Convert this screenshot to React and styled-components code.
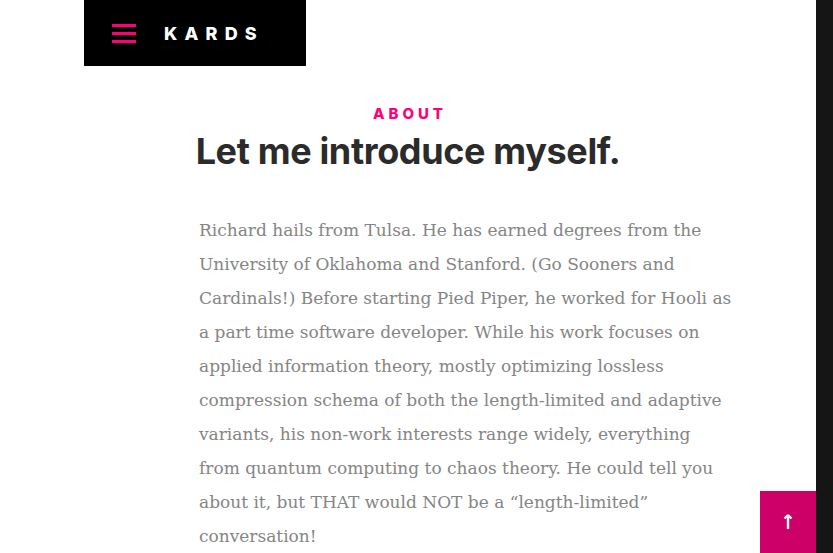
import React from "react";
import styled, { createGlobalStyle } from "styled-components";

const Global = createGlobalStyle`
  html, body { margin: 0; padding: 0; height: 100%; overflow: hidden; }
  body { background: #ffffff; font-family: "Liberation Serif", serif; }
  #root { height: 100%; }
`;

const Page = styled.div`
  display: flex;
  height: 553px;
  overflow: hidden;
`;

const Main = styled.main`
  flex: 1;
  display: flex;
  flex-direction: column;
  background: #ffffff;
`;

const Rail = styled.div`
  width: 17px;
  background: #151515;
`;

const Header = styled.header`
  margin-left: 84px;
  width: 222px;
  height: 66px;
  background: #000000;
  display: flex;
  align-items: center;
  padding-left: 28px;
  box-sizing: border-box;
  gap: 28px;
`;

const Burger = styled.div`
  width: 24px;
  display: flex;
  flex-direction: column;
  gap: 5px;
  span {
    display: block;
    height: 3px;
    background: #ff0077;
  }
`;

const Logo = styled.div`
  color: #ffffff;
  font-family: Inter, "Noto Sans", sans-serif;
  font-weight: 800;
  font-size: 18px;
  letter-spacing: 0.4em;
`;

const Intro = styled.section`
  display: flex;
  flex-direction: column;
  align-items: center;
  padding-top: 39px;
`;

const Kicker = styled.h3`
  margin: 0;
  color: #ff0077;
  font-family: Inter, "Noto Sans", sans-serif;
  font-weight: 800;
  font-size: 15px;
  line-height: 18px;
  letter-spacing: 0.26em;
  padding-left: 0.26em;
`;

const Title = styled.h1`
  margin: 6px 0 0;
  color: #2b2b2b;
  font-family: Inter, "Noto Sans", sans-serif;
  font-weight: 700;
  font-size: 36px;
  line-height: 44px;
  letter-spacing: -0.01em;
`;

const Body = styled.p`
  margin: 40px 0 0 199px;
  width: 535px;
  color: #858585;
  font-family: "DejaVu Serif", serif;
  font-size: 17px;
  line-height: 34px;
`;

const TopButton = styled.a`
  position: fixed;
  right: 17px;
  bottom: 0;
  width: 56px;
  height: 62px;
  background: #cc0066;
  color: #ffffff;
  display: flex;
  align-items: center;
  justify-content: center;
`;

export default function App() {
  return (
    <>
      <Global />
      <Page>
        <Main>
          <Header>
            <Burger>
              <span />
              <span />
              <span />
            </Burger>
            <Logo>KARDS</Logo>
          </Header>
          <Intro>
            <Kicker>ABOUT</Kicker>
            <Title>Let me introduce myself.</Title>
          </Intro>
          <Body>
            Richard hails from Tulsa. He has earned degrees from the University of
            Oklahoma and Stanford. (Go Sooners and Cardinals!) Before starting Pied
            Piper, he worked for Hooli as a part time software developer. While his
            work focuses on applied information theory, mostly optimizing lossless
            compression schema of both the length-limited and adaptive variants, his
            non-work interests range widely, everything from quantum computing to
            chaos theory. He could tell you about it, but THAT would NOT be a
            “length-limited” conversation!
          </Body>
        </Main>
        <Rail />
      </Page>
      <TopButton href="#top" aria-label="Back to top">
        <svg width="10" height="16" viewBox="0 0 10 16">
          <path d="M5 1 L1.5 4.5 M5 1 L8.5 4.5 M5 1 V15" stroke="#fff" strokeWidth="2.4" fill="none" />
        </svg>
      </TopButton>
    </>
  );
}
